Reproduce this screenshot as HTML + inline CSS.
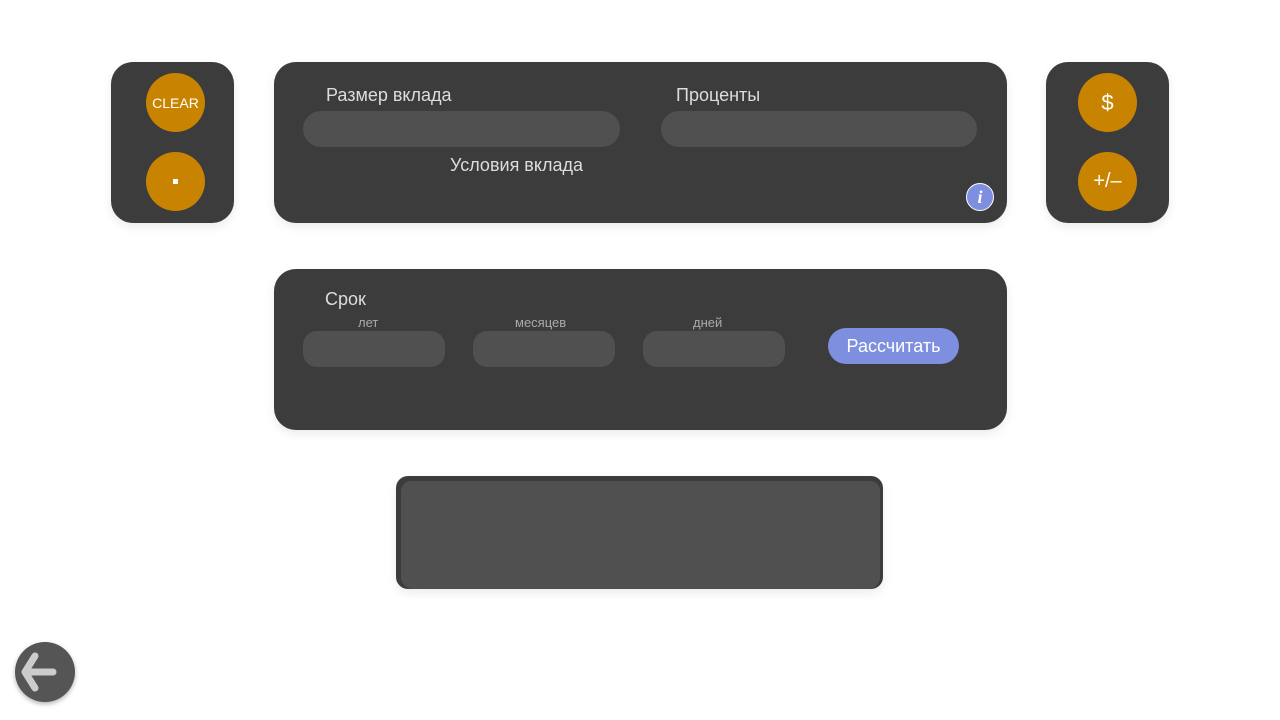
<!DOCTYPE html>
<html><head><meta charset="utf-8"><style>
body{margin:0;width:1280px;height:720px;background:#fff;position:relative;overflow:hidden;font-family:"Liberation Sans","DejaVu Sans",sans-serif;}
.p{position:absolute;background:#3c3c3c;border-radius:22px;box-shadow:0 4px 10px rgba(0,0,0,0.08);}
.c{position:absolute;width:59px;height:59px;border-radius:50%;background:#c88400;color:#fff;display:flex;align-items:center;justify-content:center;}
.in{position:absolute;background:#505050;border-radius:18px;height:36px;}
.t{position:absolute;color:#ddd;font-size:18px;white-space:nowrap;}
.s{position:absolute;color:#aaa;font-size:13px;white-space:nowrap;}
</style></head><body>
<div class="p" style="left:111px;top:62px;width:123px;height:161px;"></div>
<div class="c" style="left:146px;top:73px;font-size:14px;">CLEAR</div>
<div class="c" style="left:146px;top:152px;"><div style="width:5px;height:5px;background:#fff;"></div></div>

<div class="p" style="left:274px;top:62px;width:733px;height:161px;"></div>
<div class="t" style="left:326px;top:85px;">Размер вклада</div>
<div class="t" style="left:676px;top:85px;">Проценты</div>
<div class="in" style="left:303px;top:111px;width:317px;"></div>
<div class="in" style="left:661px;top:111px;width:316px;"></div>
<div class="t" style="left:450px;top:155px;">Условия вклада</div>
<div style="position:absolute;left:966px;top:183px;width:28px;height:28px;border-radius:50%;background:#7f8fe0;border:1px solid #fff;box-sizing:border-box;color:#fff;font:italic bold 18px 'Liberation Serif',serif;display:flex;align-items:center;justify-content:center;">i</div>

<div class="p" style="left:1046px;top:62px;width:123px;height:161px;"></div>
<div class="c" style="left:1078px;top:73px;font-size:22px;">$</div>
<div class="c" style="left:1078px;top:152px;font-size:20px;">+/–</div>

<div class="p" style="left:274px;top:269px;width:733px;height:161px;"></div>
<div class="t" style="left:325px;top:289px;">Срок</div>
<div class="s" style="left:358px;top:315px;">лет</div>
<div class="s" style="left:515px;top:315px;">месяцев</div>
<div class="s" style="left:693px;top:315px;">дней</div>
<div class="in" style="left:303px;top:331px;width:142px;border-radius:14px;"></div>
<div class="in" style="left:473px;top:331px;width:142px;border-radius:14px;"></div>
<div class="in" style="left:643px;top:331px;width:142px;border-radius:14px;"></div>
<div style="position:absolute;left:828px;top:328px;width:131px;height:36px;border-radius:18px;background:#7f8fe0;color:#fff;font-size:18px;display:flex;align-items:center;justify-content:center;">Рассчитать</div>

<div style="position:absolute;left:396px;top:476px;width:487px;height:113px;background:#3c3c3c;border-radius:12px;box-shadow:0 4px 10px rgba(0,0,0,0.08);"></div>
<div style="position:absolute;left:401px;top:481px;width:479px;height:108px;background:#505050;border-radius:10px 10px 12px 12px;"></div>

<div style="position:absolute;left:15px;top:642px;width:60px;height:60px;border-radius:50%;background:#555;box-shadow:0 2px 5px rgba(0,0,0,0.3);"></div>
<svg style="position:absolute;left:15px;top:642px" width="60" height="60"><path d="M20 14 L10 30 L20 46 M11 30 H38" stroke="#ccc" stroke-width="7" fill="none" stroke-linecap="round" stroke-linejoin="round"/></svg>
</body></html>
